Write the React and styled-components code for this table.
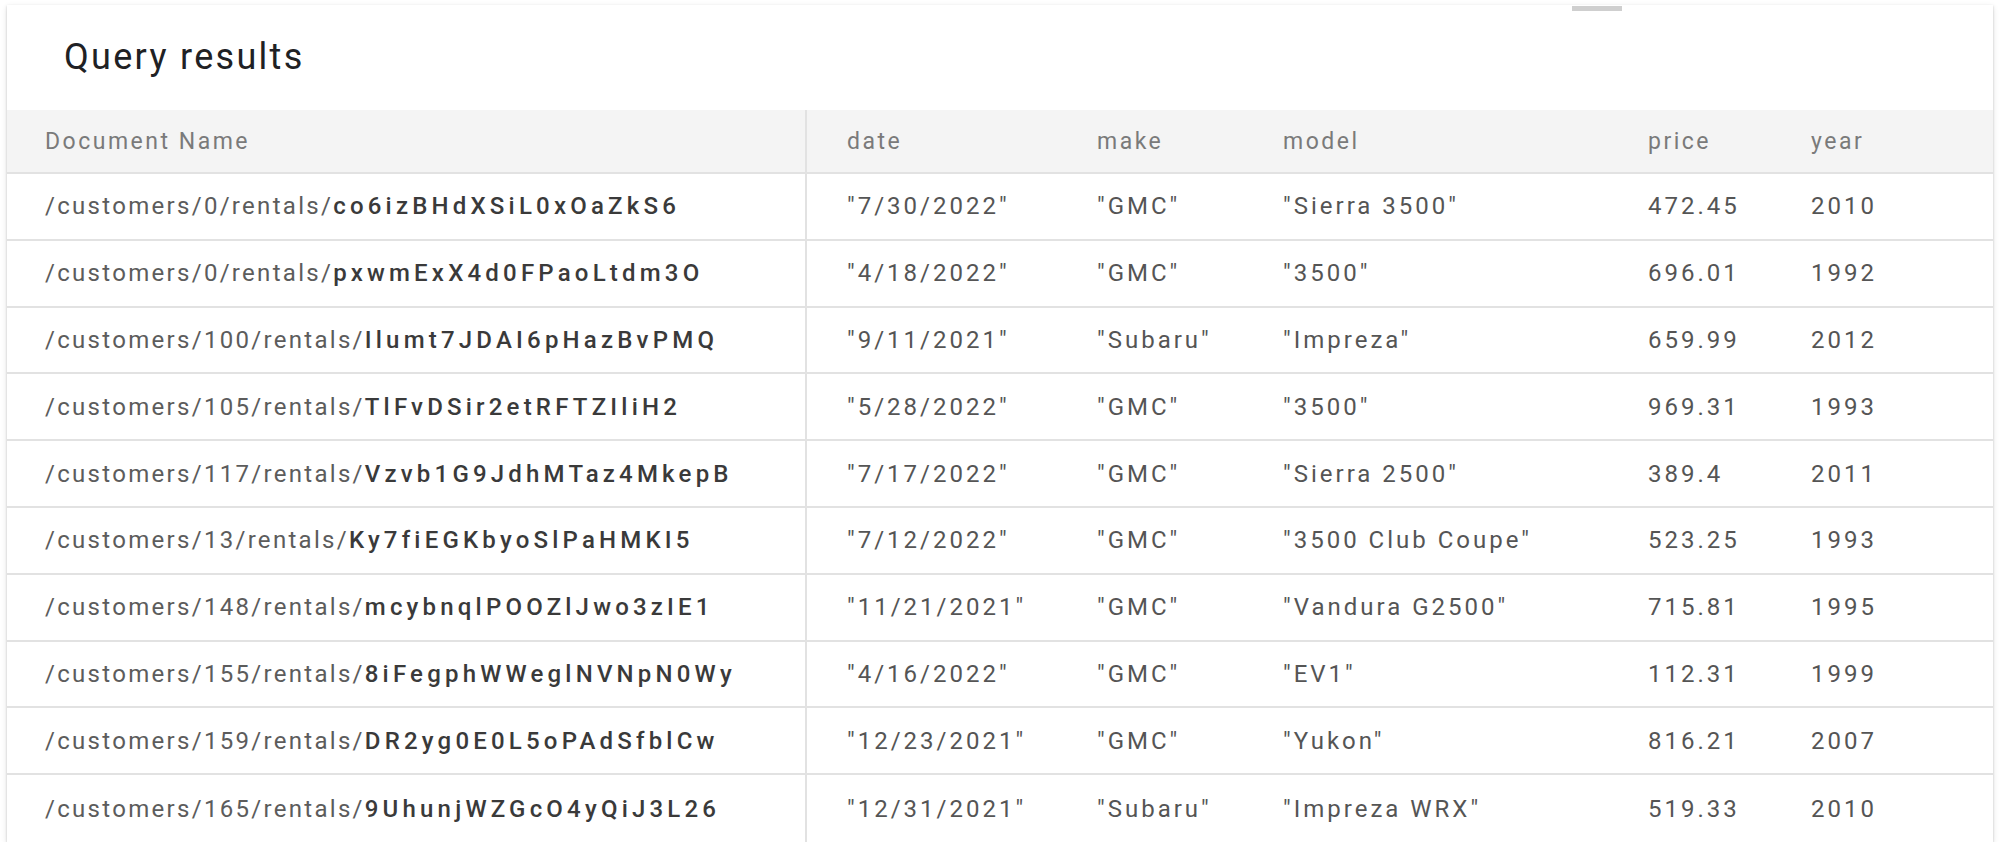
import React from "react";
import styled, { createGlobalStyle } from "styled-components";

const Global = createGlobalStyle`
  html, body { margin: 0; padding: 0; background: #ffffff; }
  body { font-family: Roboto, "Liberation Sans", Arial, sans-serif; }
`;

const Page = styled.div`
  padding: 5px 7px 0 7px;
  width: 2000px;
  box-sizing: border-box;
`;

const Card = styled.section`
  position: relative;
  background: #fff;
  width: 1986px;
  box-shadow: 0 1px 2px rgba(0, 0, 0, 0.18), 0 2px 6px rgba(0, 0, 0, 0.12);
`;

const Handle = styled.div`
  position: absolute;
  top: 1px;
  left: 1565px;
  width: 50px;
  height: 5px;
  background: #cfcfcf;
`;

const TitleBar = styled.header`
  height: 105px;
  display: flex;
  align-items: center;
  padding-left: 57px;
  box-sizing: border-box;
`;

const Title = styled.h2`
  margin: 0;
  font-family: Roboto, sans-serif;
  font-weight: 400;
  font-size: 36px;
  letter-spacing: 2.3px;
  color: #202124;
  padding-bottom: 2px;
`;

const Grid = styled.div`
  display: grid;
  grid-template-columns: 800px 250px 186px 365px 163px 1fr;
`;

const Cell = styled.div`
  box-sizing: border-box;
  height: ${(p) => (p.$head ? "64px" : "66.8px")};
  display: flex;
  align-items: center;
  padding-left: ${(p) => (p.$first ? "38px" : "40px")};
  border-bottom: ${(p) => (p.$last ? "none" : "2px solid #e2e2e2")};
  border-right: ${(p) => (p.$first ? "2px solid #e2e2e2" : "none")};
  background: ${(p) => (p.$head ? "#f4f4f4" : "#fff")};
  font-family: Roboto, sans-serif;
  font-size: ${(p) => (p.$head ? "23px" : "24px")};
  letter-spacing: ${(p) => (p.$head ? "2.5px" : "3px")};
  color: ${(p) => (p.$head ? "#7a7a7a" : "#555555")};
  white-space: nowrap;
`;

const Prefix = styled.span`
  color: #5c5c5c;
  letter-spacing: 2.3px;
`;

const DocId = styled.span`
  color: #3a3a3a;
  font-weight: 500;
  letter-spacing: 4.2px;
`;

const headers = ["Document Name", "date", "make", "model", "price", "year"];

const rows = [
  ["/customers/0/rentals/", "co6izBHdXSiL0xOaZkS6", '"7/30/2022"', '"GMC"', '"Sierra 3500"', "472.45", "2010"],
  ["/customers/0/rentals/", "pxwmExX4d0FPaoLtdm3O", '"4/18/2022"', '"GMC"', '"3500"', "696.01", "1992"],
  ["/customers/100/rentals/", "Ilumt7JDAI6pHazBvPMQ", '"9/11/2021"', '"Subaru"', '"Impreza"', "659.99", "2012"],
  ["/customers/105/rentals/", "TlFvDSir2etRFTZIliH2", '"5/28/2022"', '"GMC"', '"3500"', "969.31", "1993"],
  ["/customers/117/rentals/", "Vzvb1G9JdhMTaz4MkepB", '"7/17/2022"', '"GMC"', '"Sierra 2500"', "389.4", "2011"],
  ["/customers/13/rentals/", "Ky7fiEGKbyoSlPaHMKI5", '"7/12/2022"', '"GMC"', '"3500 Club Coupe"', "523.25", "1993"],
  ["/customers/148/rentals/", "mcybnqlPOOZlJwo3zIE1", '"11/21/2021"', '"GMC"', '"Vandura G2500"', "715.81", "1995"],
  ["/customers/155/rentals/", "8iFegphWWeglNVNpN0Wy", '"4/16/2022"', '"GMC"', '"EV1"', "112.31", "1999"],
  ["/customers/159/rentals/", "DR2yg0E0L5oPAdSfblCw", '"12/23/2021"', '"GMC"', '"Yukon"', "816.21", "2007"],
  ["/customers/165/rentals/", "9UhunjWZGcO4yQiJ3L26", '"12/31/2021"', '"Subaru"', '"Impreza WRX"', "519.33", "2010"],
];

export default function App() {
  return (
    <>
      <Global />
      <Page>
        <Card>
          <Handle />
          <TitleBar>
            <Title>Query results</Title>
          </TitleBar>
          <Grid>
            {headers.map((h, i) => (
              <Cell key={h} $head $first={i === 0}>
                {h}
              </Cell>
            ))}
            {rows.map((r, ri) => {
              const last = ri === rows.length - 1;
              return [
                <Cell key={`${ri}-0`} $first $last={last}>
                  <Prefix>{r[0]}</Prefix>
                  <DocId>{r[1]}</DocId>
                </Cell>,
                ...r.slice(2).map((v, ci) => (
                  <Cell key={`${ri}-${ci + 1}`} $last={last}>
                    {v}
                  </Cell>
                )),
              ];
            })}
          </Grid>
        </Card>
      </Page>
    </>
  );
}
